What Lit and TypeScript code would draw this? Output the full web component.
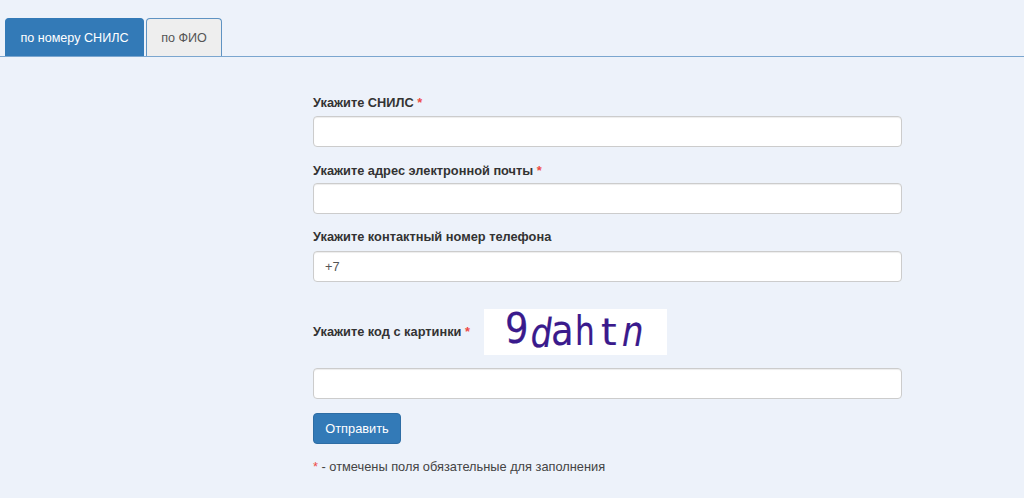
import { LitElement, html, css } from "lit";
import { customElement } from "lit/decorators.js";

@customElement("app-root")
export class AppRoot extends LitElement {
  static styles = css`
    :host {
      display: block;
      height: 498px;
      overflow: hidden;
      background: #edf2fa;
      font-family: "Liberation Sans", Arial, sans-serif;
      font-size: 12.8px;
      color: #333;
    }
    .tabs {
      display: flex;
      align-items: flex-end;
      gap: 2px;
      height: 57px;
      padding: 18px 0 0 5px;
      box-sizing: border-box;
      border-bottom: 1.5px solid #7ba6cf;
    }
    .tab {
      height: 38px;
      box-sizing: border-box;
      display: flex;
      align-items: center;
      justify-content: center;
      border-radius: 4px 4px 0 0;
      border: 1px solid #337ab7;
      border-bottom: none;
      font-size: 12.6px;
    }
    .tab.active {
      width: 139px;
      background: #337ab7;
      color: #fff;
    }
    .tab.other {
      width: 76px;
      background: #eee;
      color: #555;
      border-color: #5f93c2;
    }
    .form {
      width: 589px;
      margin-left: 313px;
      padding-top: 39px;
      display: flex;
      flex-direction: column;
    }
    label {
      display: block;
      font-weight: 700;
      line-height: 14px;
      margin-bottom: 7px;
    }
    label.first { margin-bottom: 6px; }
    label.second { margin-bottom: 5px; }
    .req { color: #ee4a45; }
    input {
      display: block;
      width: 100%;
      height: 31px;
      box-sizing: border-box;
      padding: 0 11px;
      background: #fff;
      border: 1px solid #ccc;
      border-radius: 4px;
      box-shadow: inset 0 1px 1px rgba(0, 0, 0, 0.075);
      font: 12.8px "Liberation Sans", Arial, sans-serif;
      color: #555;
      outline: none;
    }
    .group { margin-bottom: 16px; }
    .group.wide { margin-bottom: 17px; }
    .captcha-row {
      display: flex;
      align-items: center;
      margin-top: 11px;
      margin-bottom: 13px;
      gap: 14px;
    }
    .captcha-row label { margin: 0; width: 157px; white-space: nowrap; }
    .captcha {
      width: 183px;
      height: 46px;
      background: #fff;
      display: block;
      overflow: visible;
    }
    .captcha text {
      font-family: "DejaVu Sans", sans-serif;
      fill: #3a1a8c;
      stroke: #3a1a8c;
      stroke-width: 0.2px;
    }
    button {
      display: block;
      width: 88px;
      height: 31px;
      margin-top: 14px;
      background: #337ab7;
      border: 1px solid #2e6da4;
      border-radius: 4px;
      color: #fff;
      font: 12.8px "Liberation Sans", Arial, sans-serif;
      padding: 0;
    }
    .note {
      margin-top: 15px;
      line-height: 16px;
      color: #444;
    }
  `;

  render() {
    return html`
      <div class="tabs">
        <div class="tab active">по номеру СНИЛС</div>
        <div class="tab other">по ФИО</div>
      </div>
      <form class="form" @submit=${(e: Event) => e.preventDefault()}>
        <div class="group wide">
          <label class="first">Укажите СНИЛС <span class="req">*</span></label>
          <input type="text" />
        </div>
        <div class="group">
          <label class="second">Укажите адрес электронной почты <span class="req">*</span></label>
          <input type="text" />
        </div>
        <div class="group">
          <label>Укажите контактный номер телефона</label>
          <input type="text" value="+7" />
        </div>
        <div class="captcha-row">
          <label>Укажите код с картинки <span class="req">*</span></label>
          <svg class="captcha" viewBox="0 0 183 46">
            <text transform="translate(21 34) scale(0.88 1)" font-size="42">9</text>
            <text transform="translate(45 38) skewX(-8) scale(0.85 1)" font-size="40">d</text>
            <text transform="translate(67 36) scale(0.88 1)" font-size="42">a</text>
            <text transform="translate(91 36) scale(0.78 1)" font-size="40">h</text>
            <text transform="translate(117 36) scale(1.05 1)" font-size="38">t</text>
            <text transform="translate(136 37) skewX(-10) scale(0.8 1)" font-size="42">n</text>
          </svg>
        </div>
        <input type="text" />
        <button type="submit">Отправить</button>
        <div class="note"><span class="req">*</span> - отмечены поля обязательные для заполнения</div>
      </form>
    `;
  }
}
